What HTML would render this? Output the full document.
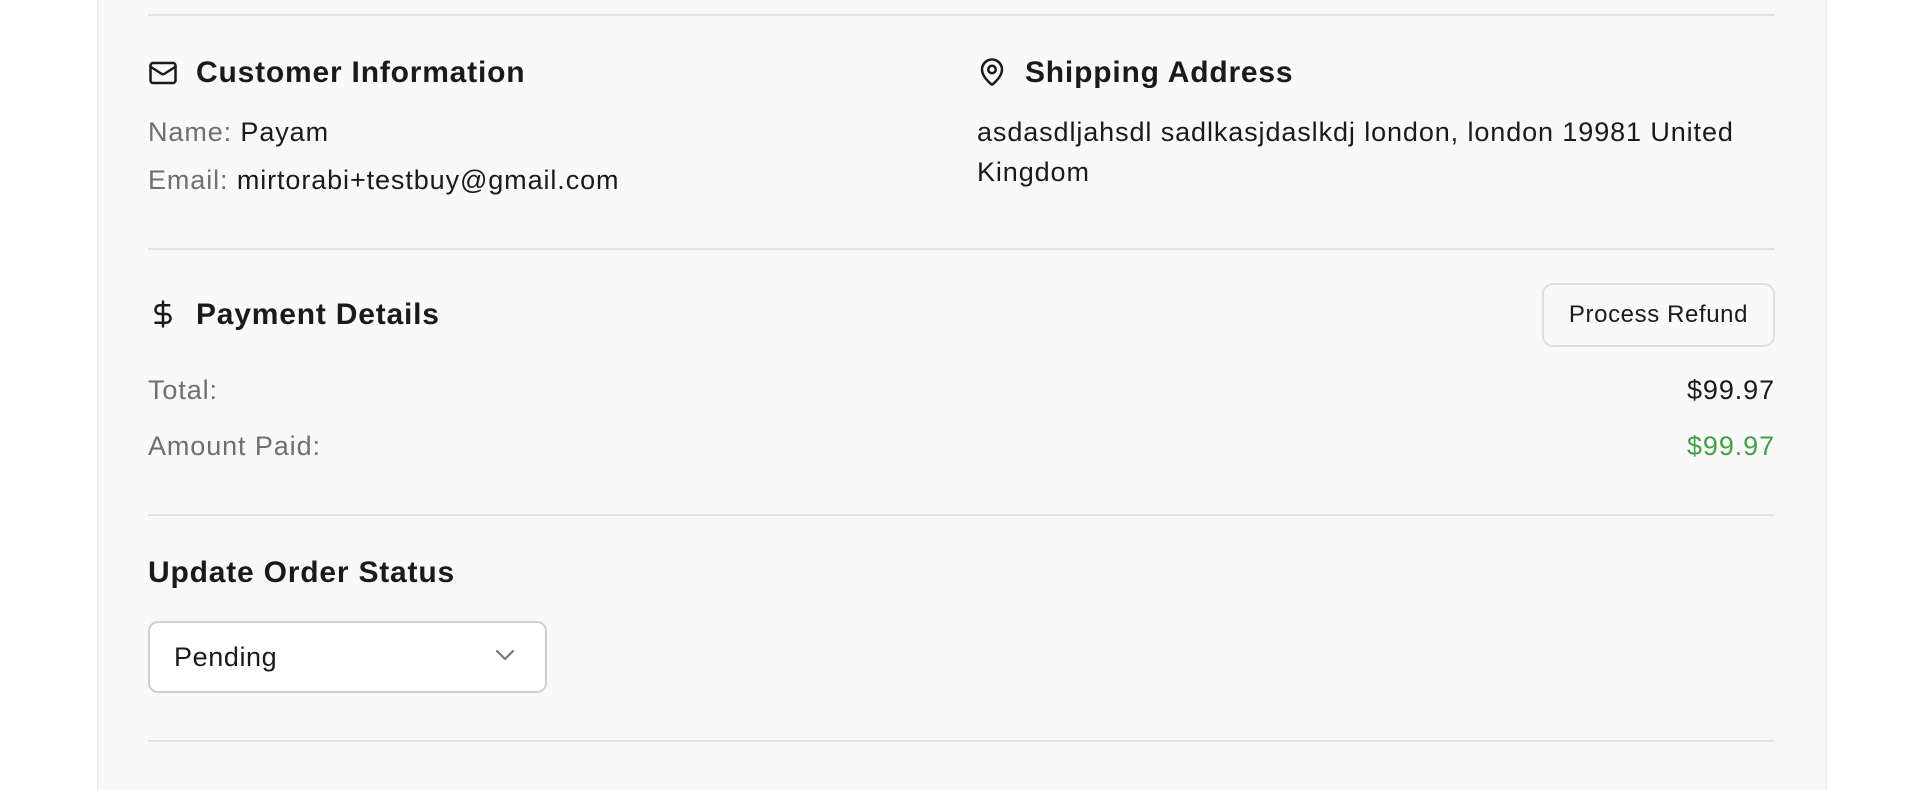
<!DOCTYPE html>
<html><head><meta charset="utf-8"><style>
html,body{margin:0;padding:0;width:1930px;height:754px;overflow:hidden;background:#fff;font-family:"Liberation Sans",sans-serif;color:#1a1a1a}
.card{position:absolute;left:97px;top:-10px;width:1726px;height:800px;background:#f9f9f9;border-left:2px solid #ececec;border-right:2px solid #ececec}
.hr{position:absolute;left:148px;width:1627px;height:2px;background:#e3e3e3}
.a{position:absolute;white-space:nowrap}
.h{font-weight:bold;font-size:30px;line-height:34px;letter-spacing:.8px}
.t{font-size:27px;line-height:34px;letter-spacing:.9px}
.g{color:#6f6f6f}
svg{position:absolute}
</style></head><body>
<div class="card"></div>
<div class="hr" style="top:14px"></div>

<svg style="left:148px;top:58px" width="30" height="30" viewBox="0 0 24 24" fill="none" stroke="#1a1a1a" stroke-width="2" stroke-linecap="round" stroke-linejoin="round"><rect x="2" y="4" width="20" height="16" rx="2"/><path d="M22 7l-8.97 5.7a1.94 1.94 0 0 1-2.06 0L2 7"/></svg>
<div class="a h" style="left:196px;top:56px">Customer Information</div>
<div class="a t" style="left:148px;top:115px"><span class="g">Name:</span> Payam</div>
<div class="a t" style="left:148px;top:163px"><span class="g">Email:</span> mirtorabi+testbuy@gmail.com</div>

<svg style="left:977px;top:57px" width="30" height="30" viewBox="0 0 24 24" fill="none" stroke="#1a1a1a" stroke-width="2" stroke-linecap="round" stroke-linejoin="round"><path d="M20 10c0 4.99-5.54 10.19-7.4 11.8a1 1 0 0 1-1.2 0C9.54 20.19 4 14.99 4 10a8 8 0 0 1 16 0"/><circle cx="12" cy="10" r="3"/></svg>
<div class="a h" style="left:1025px;top:56px">Shipping Address</div>
<div class="a t" style="left:977px;top:115px">asdasdljahsdl sadlkasjdaslkdj london, london 19981 United</div>
<div class="a t" style="left:977px;top:155px">Kingdom</div>

<div class="hr" style="top:248px"></div>

<svg style="left:148px;top:299px" width="30" height="30" viewBox="0 0 24 24" fill="none" stroke="#1a1a1a" stroke-width="2" stroke-linecap="round" stroke-linejoin="round"><line x1="12" x2="12" y1="2" y2="22"/><path d="M17 5H9.5a3.5 3.5 0 0 0 0 7h5a3.5 3.5 0 0 1 0 7H6"/></svg>
<div class="a h" style="left:196px;top:298px">Payment Details</div>
<div class="a" style="left:1542px;top:283px;width:229px;height:60px;border:2px solid #dedede;border-radius:11px;font-size:24px;line-height:60px;text-align:center;letter-spacing:.6px">Process Refund</div>
<div class="a t g" style="left:148px;top:373px">Total:</div>
<div class="a t" style="right:155px;top:373px">$99.97</div>
<div class="a t g" style="left:148px;top:429px">Amount Paid:</div>
<div class="a t" style="right:155px;top:429px;color:#43a047">$99.97</div>

<div class="hr" style="top:514px"></div>

<div class="a h" style="left:148px;top:556px">Update Order Status</div>
<div class="a" style="left:148px;top:621px;width:395px;height:68px;background:#fff;border:2px solid #cfcfcf;border-radius:10px"></div>
<div class="a t" style="left:174px;top:640px;font-size:27px;letter-spacing:.6px">Pending</div>
<svg style="left:494px;top:647px" width="22" height="16" viewBox="0 0 22 16" fill="none" stroke="#777" stroke-width="2.2" stroke-linecap="round" stroke-linejoin="round"><path d="M3 4l8 8 8-8"/></svg>

<div class="hr" style="top:740px"></div>
</body></html>
